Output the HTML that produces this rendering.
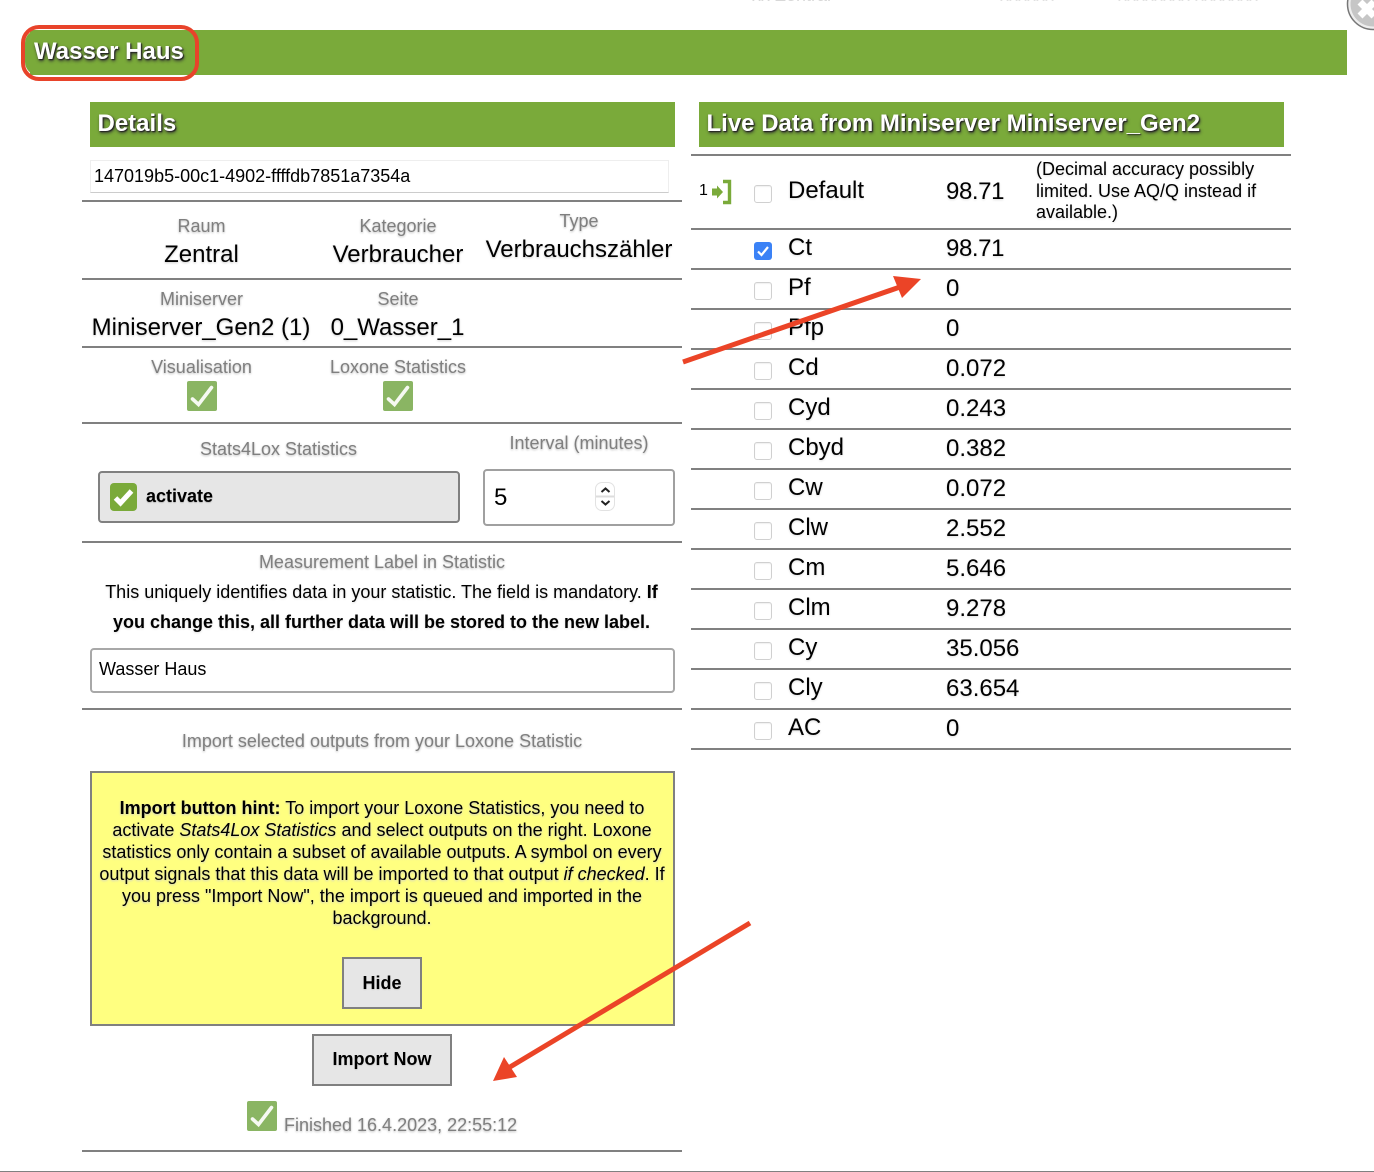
<!DOCTYPE html>
<html><head><meta charset="utf-8"><style>
html,body{margin:0;padding:0;background:#fff}
body{width:1374px;height:1172px;position:relative;overflow:hidden;font-family:"Liberation Sans",sans-serif;color:#000}
.a{position:absolute;white-space:nowrap}
.c{text-align:center}
.hr{position:absolute;height:2px;background:#808080}
.bar{position:absolute;background:#7aaa3a;color:#fff;font-weight:bold;text-shadow:1px 1px 1px #222,1px 2px 3px #333}
.l{position:absolute;white-space:nowrap;text-align:center;font-size:18px;line-height:22px;color:#7f7f7f;text-shadow:0 1px 2px #bbb}
.b{position:absolute;white-space:nowrap;text-align:center;font-size:24px;line-height:28px;text-shadow:0 1px 2px #ccc}
.t{position:absolute;white-space:nowrap;font-size:24px;line-height:28px;text-shadow:0 1px 2px #ddd}
.cb{position:absolute;left:754px;width:16px;height:16px;border:1px solid #d0d0d0;border-radius:3px;background:#fff;box-shadow:inset 0 1px 1px #f0f0f0}
.gc{position:absolute;width:30px;height:30px;background:#8ab563;border-radius:2px}
.btn{position:absolute;box-sizing:border-box;border:2px solid #808080;background:#e6e6e6;font-weight:bold;font-size:18px;text-align:center;text-shadow:0 1px 1px #ccc}
</style></head><body>

<div class="a" style="left:752px;top:-14px;font-size:18px;line-height:18px;color:#d8d8d8">xx Zentral</div>
<div class="a" style="left:1000px;top:-14px;font-size:18px;line-height:18px;color:#e0e0e0">xxxxxx</div>
<div class="a" style="left:1118px;top:-14px;font-size:18px;line-height:18px;color:#e0e0e0">xxxxxxxx xxxxxxx</div>

<svg class="a" style="left:1340px;top:0" width="34" height="32" viewBox="0 0 34 32"><circle cx="33" cy="4" r="25.500" fill="#eee" stroke="#777" stroke-width="1.500"/><circle cx="33" cy="4" r="22.500" fill="#c6c6c6"/><path d="M20 2L34 16M34 2L20 16" stroke="#fff" stroke-width="7" fill="none"/></svg>

<div class="a" style="left:25px;top:30px;width:20px;height:45px;background:#7aaa3a;border-radius:13px 0 0 13px"></div>
<div class="bar" style="left:30px;top:30px;width:1317px;height:45px;font-size:24px;line-height:43px;text-indent:4px">Wasser Haus</div>
<div class="a" style="left:21px;top:25px;width:178px;height:56px;box-sizing:border-box;border:4px solid #e8432a;border-radius:18px"></div>

<div class="bar" style="left:90px;top:102px;width:585px;height:45px;font-size:24px;line-height:43px;text-indent:7.500px">Details</div>
<div class="bar" style="left:699px;top:102px;width:585px;height:45px;font-size:24px;line-height:43px;text-indent:7.500px">Live Data from Miniserver Miniserver_Gen2</div>

<div class="a" style="left:90px;top:160px;width:579px;height:33px;box-sizing:border-box;border:1px solid #eee;border-bottom:1px solid #ccc;font-size:18px;line-height:31px;text-indent:3px">147019b5-00c1-4902-ffffdb7851a7354a</div>

<div class="hr" style="left:82px;top:200px;width:600px"></div>
<div class="hr" style="left:82px;top:278px;width:600px"></div>
<div class="hr" style="left:82px;top:346px;width:600px"></div>
<div class="hr" style="left:82px;top:422px;width:600px"></div>
<div class="hr" style="left:82px;top:541px;width:600px"></div>
<div class="hr" style="left:82px;top:708px;width:600px"></div>
<div class="hr" style="left:82px;top:1150px;width:600px"></div>
<div class="hr" style="left:0;top:1171px;width:1374px;height:1px"></div>

<div class="l" style="left:101.500px;top:215px;width:200px">Raum</div>
<div class="b" style="left:101.500px;top:241px;width:200px">Zentral</div>
<div class="l" style="left:298px;top:215px;width:200px">Kategorie</div>
<div class="b" style="left:298px;top:241px;width:200px">Verbraucher</div>
<div class="l" style="left:479px;top:210px;width:200px">Type</div>
<div class="b" style="left:479px;top:236px;width:200px">Verbrauchszähler</div>

<div class="l" style="left:101.500px;top:288px;width:200px">Miniserver</div>
<div class="b" style="left:81px;top:314px;width:240px">Miniserver_Gen2 (1)</div>
<div class="l" style="left:298px;top:288px;width:200px">Seite</div>
<div class="b" style="left:297.500px;top:314px;width:200px">0_Wasser_1</div>

<div class="l" style="left:101.500px;top:356px;width:200px">Visualisation</div>
<div class="l" style="left:298px;top:356px;width:200px">Loxone Statistics</div>
<div class="gc" style="left:187px;top:381px"><svg width="30" height="30"><path d="M5.500 18L11.500 23.500L24.500 6.500" stroke="#f6f9f2" stroke-width="3.600" stroke-linecap="round" fill="none"/></svg></div>
<div class="gc" style="left:383px;top:381px"><svg width="30" height="30"><path d="M5.500 18L11.500 23.500L24.500 6.500" stroke="#f6f9f2" stroke-width="3.600" stroke-linecap="round" fill="none"/></svg></div>

<div class="l" style="left:178.500px;top:438px;width:200px">Stats4Lox Statistics</div>
<div class="l" style="left:479px;top:432px;width:200px">Interval (minutes)</div>

<div class="a" style="left:98px;top:471px;width:362px;height:52px;box-sizing:border-box;border:2px solid #808080;border-radius:4px;background:#e6e6e6"></div>
<div class="a" style="left:110px;top:483px;width:27px;height:28px;background:#7aaa3a;border-radius:4px"><svg width="27" height="28"><path d="M5.500 15L10.500 20L21.500 8" stroke="#fff" stroke-width="5" fill="none"/></svg></div>
<div class="a" style="left:146px;top:485px;font-size:18px;line-height:22px;font-weight:bold;text-shadow:0 1px 1px #bbb">activate</div>

<div class="a" style="left:483px;top:469px;width:192px;height:57px;box-sizing:border-box;border:2px solid #a0a0a0;border-radius:4px;background:#fff"></div>
<div class="a" style="left:494px;top:484px;font-size:24px;line-height:28px">5</div>
<div class="a" style="left:595px;top:482px;width:20px;height:29px;box-sizing:border-box;border:1px solid #e2e2e2;border-radius:7px;background:#fff"><svg width="18" height="27" style="display:block"><path d="M0 13.500H18" stroke="#ddd" stroke-width="2"/><path d="M5.500 9L9.500 5.500L13.500 9M5.500 18L9.500 21.500L13.500 18" stroke="#222" stroke-width="2" fill="none"/></svg></div>

<div class="l" style="left:82px;top:551px;width:600px">Measurement Label in Statistic</div>
<div class="a c" style="left:81.500px;top:577px;width:600px;font-size:18px;line-height:30px;white-space:normal;text-shadow:0 1px 2px #ddd">This uniquely identifies data in your statistic. The field is mandatory. <b>If<br>you change this, all further data will be stored to the new label.</b></div>

<div class="a" style="left:90px;top:648px;width:585px;height:45px;box-sizing:border-box;border:2px solid #a8a8a8;border-radius:4px;font-size:18px;line-height:38px;text-indent:7px">Wasser Haus</div>

<div class="l" style="left:82px;top:730px;width:600px">Import selected outputs from your Loxone Statistic</div>

<div class="a" style="left:90px;top:771px;width:585px;height:255px;box-sizing:border-box;border:2px solid #808080;background:#ffff80"></div>
<div class="a c" style="left:91.500px;top:797px;width:581px;font-size:18px;line-height:22px;white-space:nowrap;text-shadow:0 1px 2px #ccc"><b>Import button hint:</b> To import your Loxone Statistics, you need to<br>activate <i>Stats4Lox Statistics</i> and select outputs on the right. Loxone<br>statistics only contain a subset of available outputs. A symbol on every<br>output signals that this data will be imported to that output <i>if checked</i>. If<br>you press "Import Now", the import is queued and imported in the<br>background.</div>

<div class="btn" style="left:342px;top:957px;width:80px;height:52px;line-height:49px">Hide</div>
<div class="btn" style="left:312px;top:1034px;width:140px;height:52px;line-height:46px">Import Now</div>

<div class="gc" style="left:247px;top:1101px"><svg width="30" height="30"><path d="M5.500 18L11.500 23.500L24.500 6.500" stroke="#f6f9f2" stroke-width="3.600" stroke-linecap="round" fill="none"/></svg></div>
<div class="a" style="left:284px;top:1114px;font-size:18px;line-height:22px;color:#7f7f7f;text-shadow:0 1px 2px #bbb">Finished 16.4.2023, 22:55:12</div>

<!-- right table -->
<div class="hr" style="left:691px;top:154px;width:600px"></div>
<div class="hr" style="left:691px;top:228px;width:600px"></div>
<div class="hr" style="left:691px;top:268px;width:600px"></div>
<div class="hr" style="left:691px;top:308px;width:600px"></div>
<div class="hr" style="left:691px;top:348px;width:600px"></div>
<div class="hr" style="left:691px;top:388px;width:600px"></div>
<div class="hr" style="left:691px;top:428px;width:600px"></div>
<div class="hr" style="left:691px;top:468px;width:600px"></div>
<div class="hr" style="left:691px;top:508px;width:600px"></div>
<div class="hr" style="left:691px;top:548px;width:600px"></div>
<div class="hr" style="left:691px;top:588px;width:600px"></div>
<div class="hr" style="left:691px;top:628px;width:600px"></div>
<div class="hr" style="left:691px;top:668px;width:600px"></div>
<div class="hr" style="left:691px;top:708px;width:600px"></div>
<div class="hr" style="left:691px;top:748px;width:600px"></div>

<div class="a" style="left:699px;top:182px;font-size:16px;line-height:18px">1</div>
<svg class="a" style="left:711px;top:179px" width="21" height="26" viewBox="0 0 21 26"><path d="M1 9.500h5V6.500l6 6.500-6 6.500v-3H1z" fill="#7aaa3a"/><path d="M12 2.500h6.500v21H12" stroke="#7aaa3a" stroke-width="3.400" fill="none"/></svg>

<div class="cb" style="top:185px"></div>
<div class="t" style="left:788px;top:177px">Default</div>
<div class="t" style="left:946px;top:178px;letter-spacing:-.4px">98.71</div>
<div class="a" style="left:1036px;top:159px;font-size:18px;line-height:21.700px;text-shadow:0 1px 2px #ddd">(Decimal accuracy possibly<br>limited. Use AQ/Q instead if<br>available.)</div>

<div class="a" style="left:754px;top:242px;width:18px;height:18px;background:#3b82f6;border-radius:3px"><svg width="18" height="18"><path d="M4 9.500L7.500 13L14 5" stroke="#fff" stroke-width="2.200" fill="none"/></svg></div>
<div class="t" style="left:788px;top:234px">Ct</div>
<div class="t" style="left:946px;top:235px;letter-spacing:-.4px">98.71</div>

<div class="cb" style="top:282px"></div>
<div class="t" style="left:788px;top:274px">Pf</div>
<div class="t" style="left:946px;top:275px">0</div>

<div class="cb" style="top:322px"></div>
<div class="t" style="left:788px;top:314px">Pfp</div>
<div class="t" style="left:946px;top:315px">0</div>

<div class="cb" style="top:362px"></div>
<div class="t" style="left:788px;top:354px">Cd</div>
<div class="t" style="left:946px;top:355px">0.072</div>

<div class="cb" style="top:402px"></div>
<div class="t" style="left:788px;top:394px">Cyd</div>
<div class="t" style="left:946px;top:395px">0.243</div>

<div class="cb" style="top:442px"></div>
<div class="t" style="left:788px;top:434px">Cbyd</div>
<div class="t" style="left:946px;top:435px">0.382</div>

<div class="cb" style="top:482px"></div>
<div class="t" style="left:788px;top:474px">Cw</div>
<div class="t" style="left:946px;top:475px">0.072</div>

<div class="cb" style="top:522px"></div>
<div class="t" style="left:788px;top:514px">Clw</div>
<div class="t" style="left:946px;top:515px">2.552</div>

<div class="cb" style="top:562px"></div>
<div class="t" style="left:788px;top:554px">Cm</div>
<div class="t" style="left:946px;top:555px">5.646</div>

<div class="cb" style="top:602px"></div>
<div class="t" style="left:788px;top:594px">Clm</div>
<div class="t" style="left:946px;top:595px">9.278</div>

<div class="cb" style="top:642px"></div>
<div class="t" style="left:788px;top:634px">Cy</div>
<div class="t" style="left:946px;top:635px">35.056</div>

<div class="cb" style="top:682px"></div>
<div class="t" style="left:788px;top:674px">Cly</div>
<div class="t" style="left:946px;top:675px">63.654</div>

<div class="cb" style="top:722px"></div>
<div class="t" style="left:788px;top:714px">AC</div>
<div class="t" style="left:946px;top:715px">0</div>

<!-- arrows -->
<svg class="a" style="left:0;top:0" width="1374" height="1172" viewBox="0 0 1374 1172">
<path d="M683 362L900 287" stroke="#eb4427" stroke-width="5" fill="none"/>
<path d="M921 279L893 276L902 298Z" fill="#eb4427"/>
<path d="M750 923L510 1067" stroke="#eb4427" stroke-width="5" fill="none"/>
<path d="M493 1081L504 1057L517 1077Z" fill="#eb4427"/>
</svg>
</body></html>
